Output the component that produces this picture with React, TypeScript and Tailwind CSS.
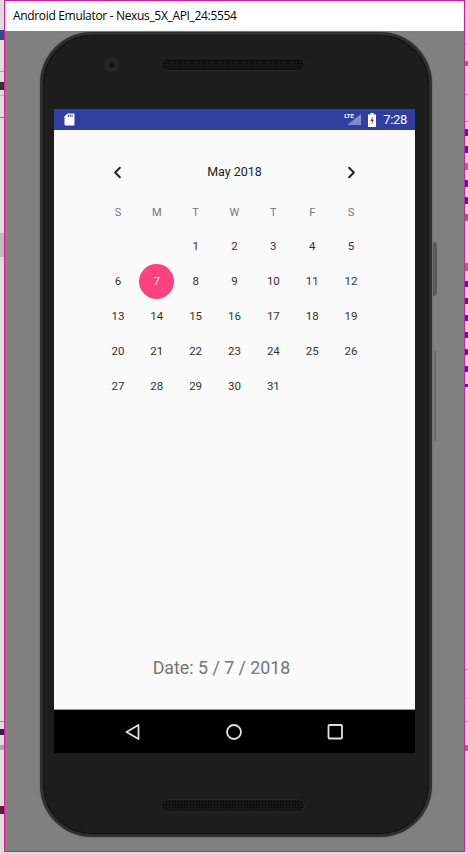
import { ChevronLeft, ChevronRight } from 'lucide-react';

const dayNames = ['S', 'M', 'T', 'W', 'T', 'F', 'S'];

// leading blanks for May 2018 starting on Tuesday
const cells: (number | null)[] = [
  null,
  null,
  ...Array.from({ length: 31 }, (_, i) => i + 1),
];

type Mark = { y: number; h: number; color: string };

// bits of the window behind the emulator that stick out on both sides
const leftMarks: Mark[] = [
  { y: 30, h: 10, color: '#2f4f86' },
  { y: 71, h: 1, color: '#a8a8a8' },
  { y: 82, h: 8, color: '#333333' },
  { y: 95, h: 1, color: '#b0b0b0' },
  { y: 117, h: 1, color: '#888888' },
  { y: 233, h: 24, color: '#bdbdbd' },
  { y: 721, h: 1, color: '#999999' },
  { y: 729, h: 6, color: '#332244' },
  { y: 745, h: 5, color: '#a8a8b0' },
  { y: 806, h: 8, color: '#552244' },
];

const rightMarks: Mark[] = [
  { y: 44, h: 1, color: '#b0b0b0' },
  { y: 61, h: 5, color: '#7a8a30' },
  { y: 94, h: 1, color: '#909090' },
  { y: 121, h: 1, color: '#888888' },
  { y: 129, h: 7, color: '#2a2ad0' },
  { y: 146, h: 7, color: '#2a2ad0' },
  { y: 163, h: 7, color: '#5c9a60' },
  { y: 180, h: 7, color: '#2a2ad0' },
  { y: 197, h: 7, color: '#2a2ad0' },
  { y: 214, h: 7, color: '#5c8a40' },
  { y: 263, h: 8, color: '#7a8a50' },
  { y: 281, h: 6, color: '#2a2ad0' },
  { y: 298, h: 6, color: '#2a2ad0' },
  { y: 315, h: 6, color: '#2a2ad0' },
  { y: 332, h: 6, color: '#2a2ad0' },
  { y: 349, h: 6, color: '#2a2ad0' },
  { y: 366, h: 6, color: '#2a2ad0' },
  { y: 384, h: 3, color: '#2a2ad0' },
  { y: 669, h: 1, color: '#999999' },
  { y: 698, h: 1, color: '#b0b0b0' },
  { y: 721, h: 1, color: '#999999' },
  { y: 745, h: 6, color: '#7a7a98' },
];

function EdgeStrip({ marks, className }: { marks: Mark[]; className: string }) {
  let cursor = 0;
  return (
    <div className={className}>
      {marks.map((m) => {
        const top = m.y - cursor;
        cursor = m.y + m.h;
        return <div key={m.y} style={{ marginTop: top, height: m.h, backgroundColor: m.color }} />;
      })}
    </div>
  );
}

function Speaker() {
  return (
    <div className="h-[13px] w-[144px] rounded-full border border-[#262626] bg-[#161616] bg-[radial-gradient(#000000_0.7px,transparent_0.8px)] bg-[length:3px_3px]" />
  );
}

function StatusBar() {
  return (
    <div className="flex h-[21px] items-center justify-between bg-[#303f9f] pl-[10px] pr-[8px] font-['Roboto',sans-serif]">
      <svg width="11" height="13" viewBox="0 0 11 13">
        <path d="M3.5 0.5H9.5Q10.5 0.5 10.5 1.5V11.5Q10.5 12.5 9.5 12.5H1.5Q0.5 12.5 0.5 11.5V3.5Z" fill="#ffffff" />
        <path d="M4.5 1.5V4M6.3 1.5V4M8.1 1.5V4" stroke="#303f9f" strokeWidth="0.9" />
      </svg>
      <div className="flex items-center">
        <div className="relative mr-[7px] h-[11px] w-[14px]">
          <svg width="14" height="11" viewBox="0 0 14 11">
            <path d="M14 0V11H0Z" fill="#ffffff" fillOpacity="0.4" />
          </svg>
          <span className="absolute left-[-3px] top-[-2px] text-[6px] font-bold leading-[8px] text-white">LTE</span>
        </div>
        <svg width="8" height="14" viewBox="0 0 8 14" className="mr-[7px]">
          <path d="M2.5 0H5.5V1.5H8V14H0V1.5H2.5Z" fill="#ffffff" />
          <path d="M4.6 3.5L2.4 8H3.8V11.2L5.8 6.8H4.4Z" fill="#303f9f" />
        </svg>
        <span className="text-[13px] leading-none tracking-[-0.3px] text-white">7:28</span>
      </div>
    </div>
  );
}

function Calendar() {
  return (
    <div className="px-[44.5px] pt-[27px]">
      <div className="flex h-[30px] items-center justify-between text-[#212121]">
        <div className="flex w-[38.7px] justify-center">
          <ChevronLeft size={19} strokeWidth={2.4} />
        </div>
        <span className="text-[12.5px]">May 2018</span>
        <div className="flex w-[38.7px] justify-center">
          <ChevronRight size={19} strokeWidth={2.4} />
        </div>
      </div>
      <div className="mt-[16px] grid grid-cols-7">
        {dayNames.map((name, i) => (
          <div key={i} className="flex h-[20px] items-center justify-center text-[11px] text-[#757575]">
            {name}
          </div>
        ))}
      </div>
      <div className="mt-[6px] grid grid-cols-7 auto-rows-[35px]">
        {cells.map((day, i) => (
          <div key={i} className="flex items-center justify-center text-[11.5px] text-[#333333]">
            {day === 7 ? (
              <span className="flex h-[35px] w-[35px] items-center justify-center rounded-full bg-[#ff4081] text-white">
                7
              </span>
            ) : (
              day
            )}
          </div>
        ))}
      </div>
    </div>
  );
}

function NavBar() {
  return (
    <div className="flex h-[44px] items-center justify-center gap-[77px] border-t border-[#9a9a9a] bg-black pr-[1px]">
      <svg width="24" height="24" viewBox="0 0 24 24">
        <path d="M17.5 5V19L5.5 12Z" fill="none" stroke="#e0e0e0" strokeWidth="1.8" strokeLinejoin="round" />
      </svg>
      <svg width="24" height="24" viewBox="0 0 24 24">
        <circle cx="12" cy="12" r="7" fill="none" stroke="#e0e0e0" strokeWidth="1.8" />
      </svg>
      <svg width="24" height="24" viewBox="0 0 24 24">
        <rect x="5.5" y="5" width="13.5" height="13.5" rx="1" fill="none" stroke="#e0e0e0" strokeWidth="1.8" />
      </svg>
    </div>
  );
}

function Phone() {
  return (
    <div className="relative ml-[35px] h-[805px] w-[392px] rounded-[52px] border-[3px] border-[#2f2f2f] bg-[#1d1d1d] shadow-[0_0_2px_#555555,inset_0_0_0_1px_#111111]">
      {/* side buttons */}
      <div className="absolute right-[-8px] top-[207px] h-[54px] w-[4px] rounded-r-sm bg-[#5a5a5a]" />
      <div className="absolute right-[-7px] top-[316px] h-[90px] w-[2px] bg-[#686868]" />

      <div className="flex h-[74px] items-start pt-[21px]">
        <div className="ml-[61px] mt-[1px] flex h-[15px] w-[15px] items-center justify-center rounded-full bg-[#262626]">
          <div className="h-[6px] w-[6px] rounded-full bg-[#151518]" />
        </div>
        <div className="ml-[42px] mt-[2px]">
          <Speaker />
        </div>
      </div>

      <div className="ml-[11px] w-[361px]">
        <StatusBar />
        <div className="flex h-[579px] flex-col bg-[#fafafa] font-['Roboto',sans-serif]">
          <Calendar />
          <div className="mt-auto pb-[29px] pr-[26px] text-center text-[17.8px] leading-[24px] text-[#757575]">
            Date: 5 / 7 / 2018
          </div>
        </div>
        <NavBar />
      </div>

      <div className="ml-[118px] mt-[46px]">
        <Speaker />
      </div>
    </div>
  );
}

export default function App() {
  return (
    <div className="flex h-[854px] w-[468px] overflow-hidden bg-[#dcdcdc] font-['Open_Sans',sans-serif]">
      <EdgeStrip marks={leftMarks} className="w-[4px] shrink-0" />
      <div className="flex h-[852px] w-[461px] shrink-0 flex-col border border-[#e6149a]">
        <div className="flex h-[30px] items-center bg-white pl-[8px] text-[12px] tracking-[-0.33px] text-black">
          Android Emulator - Nexus_5X_API_24:5554
        </div>
        <div className="flex flex-1 bg-[#808080] pt-[1px]">
          <Phone />
        </div>
      </div>
      <EdgeStrip marks={rightMarks} className="flex-1" />
    </div>
  );
}
